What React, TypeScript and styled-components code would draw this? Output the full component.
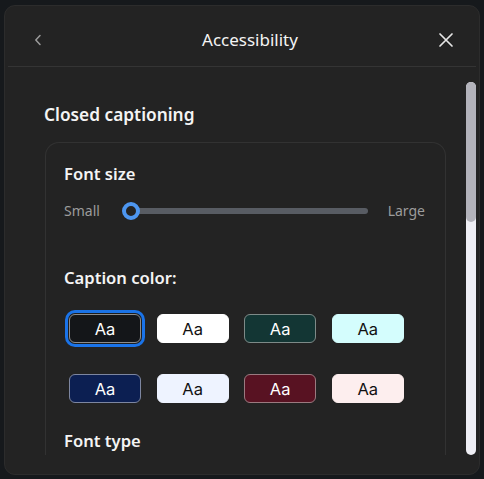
import React from "react";
import styled, { createGlobalStyle } from "styled-components";

const GlobalStyle = createGlobalStyle`
  html, body {
    margin: 0;
    padding: 0;
    background: #16191c;
  }
  body {
    font-family: "Noto Sans", "Open Sans", sans-serif;
    color: #f2f2f2;
  }
`;

const Dialog = styled.div`
  margin: 5px 4px;
  height: 470px;
  box-sizing: border-box;
  background: #232323;
  border: 1px solid #2c2c2c;
  border-radius: 11px;
  display: flex;
  flex-direction: column;
  overflow: hidden;
`;

const Header = styled.div`
  height: 52px;
  padding-top: 8px;
  margin: 0 3px;
  border-bottom: 1px solid #343434;
  display: flex;
  align-items: center;
`;

const IconButton = styled.button`
  width: 32px;
  height: 32px;
  margin: 0 ${(p: { $side: "left" | "right" }) => (p.$side === "left" ? "0 0 14px" : "14px 0 0")};
  padding: 0;
  border: none;
  background: transparent;
  display: flex;
  align-items: center;
  justify-content: center;
  color: ${(p) => (p.$side === "left" ? "#9a9a9a" : "#e6e6e6")};
`;

const Title = styled.div`
  flex: 1;
  text-align: center;
  padding-left: 16px;
  font-size: 17px;
  line-height: 24px;
  font-weight: 400;
  color: #f4f4f4;
`;

const Body = styled.div`
  flex: 1;
  min-height: 0;
  display: flex;
  padding: 15px 0 19px;
`;

const ScrollContent = styled.div`
  flex: 1;
  overflow: hidden;
  padding: 21px 20px 0 39px;
`;

const ScrollTrack = styled.div`
  width: 10px;
  margin: 0 3px 0 0;
  background: #efeff5;
  border-radius: 5px;
`;

const ScrollThumb = styled.div`
  height: 140px;
  background: #b3b3bb;
  border-radius: 5px;
`;

const SectionTitle = styled.div`
  font-size: 17.3px;
  line-height: 24px;
  font-weight: 600;
  color: #f4f4f4;
`;

const Card = styled.div`
  margin: 15px 0 0 1px;
  width: 401px;
  box-sizing: border-box;
  border: 1px solid #323232;
  border-bottom: none;
  border-radius: 14px 14px 0 0;
  padding: 19px 20px 40px 18px;
`;

const FieldLabel = styled.div<{ $gap: number }>`
  margin-top: ${(p) => p.$gap}px;
  font-size: 16.6px;
  line-height: 24px;
  font-weight: 600;
  color: #f4f4f4;
`;

const SliderRow = styled.div`
  margin-top: 13px;
  height: 24px;
  display: flex;
  align-items: center;
`;

const SliderEnd = styled.span`
  font-size: 14px;
  color: #9c9c9c;
  line-height: 24px;
`;

const SliderTrack = styled.div`
  position: relative;
  flex: 1;
  height: 24px;
  margin: 0 20px 0 22px;
`;

const SliderBar = styled.div`
  position: absolute;
  left: 8px;
  right: 0;
  top: 9px;
  height: 6px;
  border-radius: 3px;
  background: #585c63;
`;

const SliderThumb = styled.div`
  position: absolute;
  left: 0;
  top: 3px;
  width: 18px;
  height: 18px;
  box-sizing: border-box;
  border-radius: 50%;
  border: 4px solid #4d96f0;
  background: #232323;
`;

const SwatchGrid = styled.div`
  margin-top: 24px;
  padding-left: 5px;
  display: grid;
  grid-template-columns: repeat(4, 72px);
  column-gap: 15.6px;
  row-gap: 31px;
`;

const Swatch = styled.button<{ $bg: string; $fg: string; $edge: string; $selected?: boolean }>`
  height: 29px;
  padding: 0;
  box-sizing: border-box;
  border-radius: 6px;
  background: ${(p) => p.$bg};
  color: ${(p) => p.$fg};
  border: 1px solid ${(p) => p.$edge};
  font-family: Inter, "Liberation Sans", sans-serif;
  font-size: 16.5px;
  box-shadow: ${(p) => (p.$selected ? "0 0 0 1px #1d1d1d, 0 0 0 4px #1a73e8" : "none")};
`;

const swatches = [
  { bg: "#141619", fg: "#ffffff", edge: "#8c8c8c", selected: true },
  { bg: "#ffffff", fg: "#111111", edge: "#ffffff" },
  { bg: "#133634", fg: "#ffffff", edge: "#7e8a88" },
  { bg: "#d4fdfd", fg: "#111111", edge: "#d4fdfd" },
  { bg: "#0c1f52", fg: "#ffffff", edge: "#7d86a0" },
  { bg: "#eef3ff", fg: "#111111", edge: "#eef3ff" },
  { bg: "#581222", fg: "#ffffff", edge: "#9a7a80" },
  { bg: "#fdeeee", fg: "#111111", edge: "#fdeeee" },
];

export default function App() {
  return (
    <>
      <GlobalStyle />
      <Dialog>
        <Header>
          <IconButton $side="left" aria-label="Back">
            <svg width="10" height="12" viewBox="0 0 10 12" fill="none">
              <path d="M7 1.5 L2.8 6 L7 10.5" stroke="currentColor" strokeWidth="1.5" strokeLinecap="round" strokeLinejoin="round" />
            </svg>
          </IconButton>
          <Title>Accessibility</Title>
          <IconButton $side="right" aria-label="Close">
            <svg width="16" height="16" viewBox="0 0 16 16" fill="none">
              <path d="M2 2 L14 14 M14 2 L2 14" stroke="currentColor" strokeWidth="1.7" strokeLinecap="round" />
            </svg>
          </IconButton>
        </Header>
        <Body>
          <ScrollContent>
            <SectionTitle>Closed captioning</SectionTitle>
            <Card>
              <FieldLabel $gap={0}>Font size</FieldLabel>
              <SliderRow>
                <SliderEnd>Small</SliderEnd>
                <SliderTrack>
                  <SliderBar />
                  <SliderThumb />
                </SliderTrack>
                <SliderEnd>Large</SliderEnd>
              </SliderRow>
              <FieldLabel $gap={43}>Caption color:</FieldLabel>
              <SwatchGrid>
                {swatches.map((s, i) => (
                  <Swatch key={i} $bg={s.bg} $fg={s.fg} $edge={s.edge} $selected={s.selected}>
                    Aa
                  </Swatch>
                ))}
              </SwatchGrid>
              <FieldLabel $gap={26}>Font type</FieldLabel>
            </Card>
          </ScrollContent>
          <ScrollTrack>
            <ScrollThumb />
          </ScrollTrack>
        </Body>
      </Dialog>
    </>
  );
}
